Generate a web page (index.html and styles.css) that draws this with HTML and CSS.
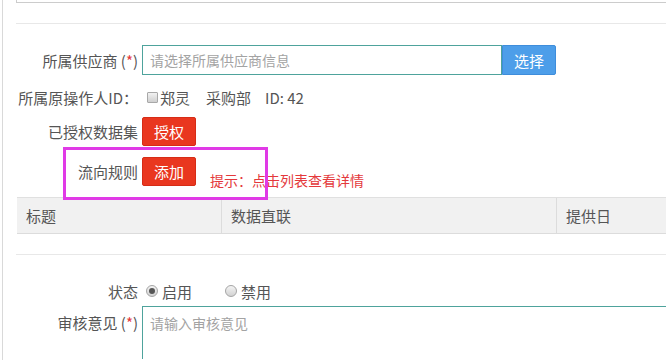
FILE: index.html
```html
<!DOCTYPE html>
<html lang="zh-CN">
<head>
    <meta charset="UTF-8">
    <meta name="viewport" content="width=device-width, initial-scale=1.0">
    <title>流向规则</title>
    <link rel="stylesheet" href="styles.css">
</head>
<body>
    <div class="page">
        <div class="prev-box"></div>
        <div class="divider first"></div>

        <div class="form">
            <div class="form-row row-supplier">
                <label class="form-label">所属供应商 (<span class="req">*</span>)</label>
                <div class="input-group">
                    <input class="text-input" placeholder="请选择所属供应商信息" autocomplete="off">
                    <button class="btn btn-blue">选择</button>
                </div>
            </div>

            <div class="form-row row-operator">
                <label class="form-label">所属原操作人ID：</label>
                <div class="operator">
                    <span class="fake-check"></span><span>郑灵</span>
                    <span class="dept">采购部</span>
                    <span class="op-id">ID: 42</span>
                </div>
            </div>

            <div class="form-row row-auth">
                <label class="form-label">已授权数据集</label>
                <button class="btn btn-red">授权</button>
            </div>

            <div class="form-row row-rule">
                <label class="form-label">流向规则</label>
                <button class="btn btn-red">添加</button>
                <span class="hint">提示：点击列表查看详情</span>
            </div>
        </div>

        <table class="rule-table">
            <thead>
                <tr>
                    <th class="col-title">标题</th>
                    <th class="col-link">数据直联</th>
                    <th class="col-date">提供日</th>
                </tr>
            </thead>
        </table>

        <div class="divider second"></div>

        <div class="form">
            <div class="form-row row-status">
                <label class="form-label">状态</label>
                <div class="radios">
                    <span class="fake-radio checked"></span><span class="radio-text">启用</span>
                    <span class="fake-radio"></span><span class="radio-text">禁用</span>
                </div>
            </div>

            <div class="form-row row-remark">
                <label class="form-label">审核意见 (<span class="req">*</span>)</label>
                <textarea class="text-area" placeholder="请输入审核意见"></textarea>
            </div>
        </div>

        <div class="highlight"></div>
    </div>
</body>
</html>
```

FILE: styles.css
```css
html, body {
    margin: 0;
    padding: 0;
    overflow: hidden;
}

body {
    font-family: "Microsoft YaHei", "Noto Sans CJK SC", sans-serif;
    font-size: 15px;
    color: #555;
    background-color: #fff;
}

.page {
    position: relative;
    margin-left: 2px;
    border-left: 1px solid #d9d9d9;
    padding-left: 13px;
    height: 360px;
    overflow: hidden;
}

.prev-box {
    height: 2px;
    border-left: 1px solid #ccc;
    border-bottom: 1px solid #ccc;
}

.divider {
    border-top: 1px solid #e8e8e8;
}

.divider.first {
    margin-top: 20px;
}

.divider.second {
    margin-top: 20px;
}

.form {
    display: flex;
    flex-direction: column;
}

.form-row {
    display: flex;
    align-items: center;
}

.form-label {
    width: 122px;
    padding-right: 4px;
    text-align: right;
    white-space: nowrap;
    flex-shrink: 0;
}

.req {
    color: #e4393c;
}

.row-supplier {
    margin-top: 21px;
    height: 30px;
}

.input-group {
    display: flex;
    height: 30px;
}

.text-input {
    width: 360px;
    height: 30px;
    box-sizing: border-box;
    border: 1px solid #4ea39c;
    padding: 0 7px;
    font-family: inherit;
    font-size: 14px;
    color: #555;
    outline: none;
}

.text-input::placeholder,
.text-area::placeholder {
    color: #a3a3a3;
}

.btn {
    width: 54px;
    height: 29px;
    box-sizing: border-box;
    border-radius: 2px;
    font-family: inherit;
    font-size: 15px;
    color: #fff;
    cursor: pointer;
    padding: 0;
}

.btn-blue {
    height: 30px;
    border: 1px solid #3e8ddb;
    border-radius: 0 2px 2px 0;
    background-color: #4d9ee9;
}

.btn-red {
    border: 1px solid #d62c16;
    background-color: #e9371f;
}

.row-operator {
    margin-top: 8px;
    height: 28px;
}

.operator {
    display: flex;
    align-items: center;
    margin-left: 5px;
}

.fake-check {
    width: 9px;
    height: 9px;
    margin-right: 2px;
    border: 1px solid #a8a8a8;
    border-radius: 1px;
    background: linear-gradient(#f2f2f2, #cfcfcf);
}

.dept {
    margin-left: 16px;
}

.op-id {
    margin-left: 14px;
}

.row-auth {
    margin-top: 6px;
    height: 29px;
}

.row-rule {
    margin-top: 11px;
    height: 29px;
}

.hint {
    align-self: flex-end;
    margin-left: 14px;
    margin-bottom: -4px;
    font-size: 14px;
    color: #e4393c;
}

.rule-table {
    margin-top: 11px;
    margin-left: 1px;
    width: 649px;
    border-collapse: collapse;
}

.rule-table th {
    height: 35px;
    padding: 0 9px;
    text-align: left;
    font-weight: normal;
    color: #555;
    background-color: #f1f1f1;
    border-top: 1px solid #e0e0e0;
    border-bottom: 1px solid #dcdcdc;
    border-left: 1px solid #dcdcdc;
}

.rule-table th:first-child {
    border-left: none;
}

.col-title {
    width: 186px;
}

.col-link {
    width: 316px;
}

.row-status {
    margin-top: 22px;
    height: 28px;
}

.radios {
    display: flex;
    align-items: center;
    margin-left: 4px;
}

.fake-radio {
    position: relative;
    width: 10px;
    height: 10px;
    border: 1px solid #a5a5a5;
    border-radius: 50%;
    background: linear-gradient(#f4f4f4, #d2d2d2);
}

.fake-radio.checked::after {
    content: "";
    position: absolute;
    left: 2px;
    top: 2px;
    width: 6px;
    height: 6px;
    border-radius: 50%;
    background-color: #555;
}

.radio-text {
    margin-left: 4px;
    margin-right: 33px;
}

.row-remark {
    margin-top: 1px;
    align-items: flex-start;
}

.row-remark .form-label {
    padding-top: 6px;
}

.text-area {
    flex: 1;
    height: 53px;
    box-sizing: border-box;
    border: 1px solid #4ea39c;
    border-right: none;
    border-bottom: none;
    padding: 6px 7px;
    font-family: inherit;
    font-size: 14px;
    color: #555;
    resize: none;
    outline: none;
}

.highlight {
    position: absolute;
    left: 60px;
    top: 147px;
    width: 199px;
    height: 47px;
    border: 3px solid #e03ae6;
    pointer-events: none;
}
```
